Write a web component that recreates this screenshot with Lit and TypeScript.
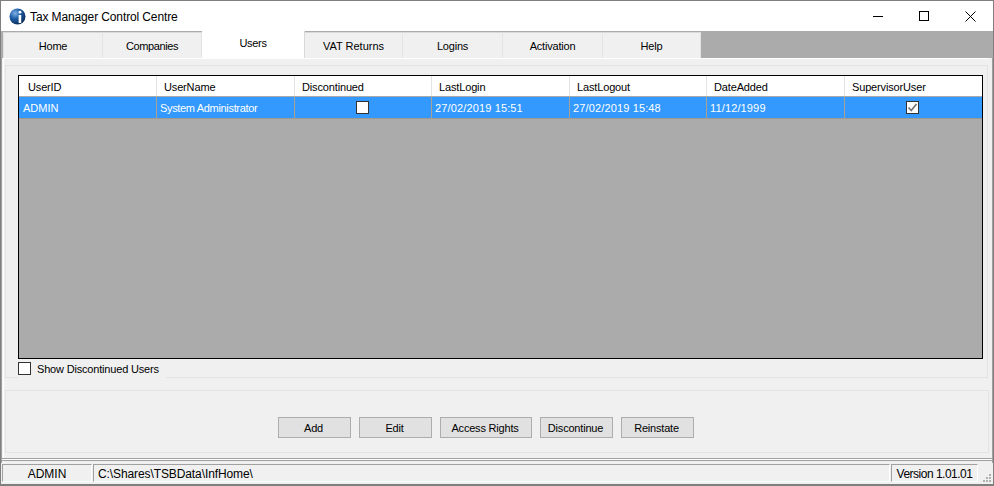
import { LitElement, html, css, svg } from "lit";
import { customElement } from "lit/decorators.js";

const COLS = [138, 138, 137, 138, 137, 138, 136];
const HEAD = ["UserID", "UserName", "Discontinued", "LastLogin", "LastLogout", "DateAdded", "SupervisorUser"];
const TABS: [string, number, number][] = [
  ["Home", 100, -0.2],
  ["Companies", 99, -0.4],
  ["Users", 103, -0.3],
  ["VAT Returns", 98, 0],
  ["Logins", 100, -0.2],
  ["Activation", 100, -0.2],
  ["Help", 98, -0.2],
];

@customElement("app-root")
export class AppRoot extends LitElement {
  static styles = css`
    :host { display: block; width: 994px; height: 486px; font-family: "Liberation Sans", Arial, sans-serif; font-size: 11px; color: #000; overflow: hidden; }
    * { box-sizing: border-box; }
    .win { width: 994px; height: 486px; border: 1px solid #7f7f7f; border-bottom-width: 2px; background: #f0f0f0; display: flex; flex-direction: column; }
    .title { height: 30px; background: #fff; display: flex; align-items: center; flex: none; }
    .logo { width: 17px; height: 17px; margin: 0 4px 0 8px; flex: none; }
    .title-text { flex: 1; color: #000; font-size: 12px; letter-spacing: -0.12px; padding-top: 1px; }
    .wbtn { width: 46px; height: 30px; display: flex; align-items: center; justify-content: center; }
    .tabs { height: 27px; background: #ababab; display: flex; align-items: stretch; padding-left: 2px; flex: none; }
    .tab { background: #f0f0f0; border: 1px solid #e3e3e3; border-left-width: 0; border-top: 1px solid #d9d9d9; border-bottom: 0; display: flex; align-items: center; justify-content: center; margin-top: 1px; padding-top: 1px; }
    .tab:first-child { border-left: 1px solid #e3e3e3; }
    .tab.on { background: #fff; margin-top: 0; padding: 0 0 3px; border-top: 0; border-right: 1px solid #d9d9d9; }
    .page { flex: 1; min-height: 0; display: flex; flex-direction: column; border-left: 1px solid #a0a0a0; border-right: 1px solid #a0a0a0; padding: 0 3px 0 1px; background: #f0f0f0; }
    .body { flex: 1; min-height: 0; border-left: 1px solid #fff; border-top: 1px solid #fff; padding: 6px 0 0 1px; display: flex; flex-direction: column; }
    .group { height: 313px; margin-right: 1px; border: 1px solid #e3e3e3; padding: 9px 4px 0 12px; flex: none; }
    .grid { height: 284px; border: 1px solid #000; background: #ababab; display: flex; flex-direction: column; }
    .row { display: flex; flex: none; }
    .head { height: 21px; background: #fff; border-bottom: 1px solid #a9a9a9; letter-spacing: -0.15px; }
    .head .c { border-right: 1px solid #e3e3e3; padding: 1px 0 0 7px; display: flex; align-items: center; }
    .head .c:first-child { padding-left: 9px; }
    .sel { height: 22px; background: #3399ff; color: #fff; border-bottom: 1px solid #a09a8e; }
    .sel .c { border-right: 1px solid #a9a294; padding-left: 3px; display: flex; align-items: center; }
    .sel .c:first-child { padding-left: 4px; }
    .sel .c.cb { justify-content: center; padding: 0 2px 0 0; }
    .c:last-child { border-right: 0 !important; }
    .name { letter-spacing: -0.33px; }
    .date { letter-spacing: 0.14px; }
    .box { width: 13px; height: 13px; display: block; }
    .show { display: flex; align-items: center; height: 19px; width: 148px; background: #f0f0f0; gap: 6px; white-space: nowrap; letter-spacing: -0.18px; }
    .show .box { background: #fff; border: 1px solid #333; flex: none; }
    .group2 { height: 63px; margin-top: 12px; border: 1px solid #e3e3e3; display: flex; align-items: flex-start; padding: 26px 0 0 272px; gap: 8px; flex: none; }
    .btn { height: 21px; background: #e1e1e1; border: 1px solid #adadad; padding-right: 2px; display: flex; align-items: center; justify-content: center; letter-spacing: -0.2px; }
    .rule { height: 3px; border-top: 1px solid #a0a0a0; border-bottom: 1px solid #a0a0a0; margin: 5px -3px 0 -3px; background: #fff; flex: none; }
    .status { height: 21px; flex: none; background: #f0f0f0; display: flex; padding: 1px 0 0 1px; font-size: 12px; }
    .cell { height: 18px; padding-top: 2px; border-top: 1px solid #a0a0a0; border-left: 1px solid #a0a0a0; border-right: 1px solid #fff; border-bottom: 1px solid #fff; display: flex; align-items: center; }
    .c1 { width: 90px; justify-content: center; }
    .c2 { width: 797px; padding-left: 4px; margin-left: 1px; letter-spacing: -0.1px; }
    .c3 { width: 87px; justify-content: center; margin-left: 1px; letter-spacing: -0.5px; }
    .grip { width: 15px; height: 19px; margin-left: auto; }
  `;

  logo() {
    return svg`<svg class="logo" viewBox="0 0 17 17">
      <defs><radialGradient id="g" cx="35%" cy="30%" r="75%"><stop offset="0" stop-color="#7fb2e6"/><stop offset=".45" stop-color="#1f5fa8"/><stop offset="1" stop-color="#0b2a55"/></radialGradient></defs>
      <circle cx="8.5" cy="8.5" r="8" fill="url(#g)"/>
      <circle cx="11" cy="4.2" r="1.4" fill="#fff"/>
      <path d="M9.6 7 h2.6 v8 h-2.6z" fill="#fff"/>
    </svg>`;
  }

  checkbox(on: boolean) {
    return svg`<svg class="box" viewBox="0 0 13 13">
      <rect x=".5" y=".5" width="12" height="12" fill="#fff" stroke="#333"/>
      ${on ? svg`<path d="M2.5 6.5 L5.2 9.5 L10.5 3" fill="none" stroke="#707070" stroke-width="1.6"/>` : ""}
    </svg>`;
  }

  render() {
    const vals = ["ADMIN", "System Administrator", null, "27/02/2019 15:51", "27/02/2019 15:48", "11/12/1999", null];
    return html`<div class="win">
      <div class="title">
        ${this.logo()}
        <div class="title-text">Tax Manager Control Centre</div>
        <div class="wbtn"><svg width="10" height="10" viewBox="0 0 10 10"><path d="M0 5.5H10" stroke="#000"/></svg></div>
        <div class="wbtn"><svg width="10" height="10" viewBox="0 0 10 10"><rect x=".5" y=".5" width="9" height="9" fill="none" stroke="#000"/></svg></div>
        <div class="wbtn"><svg width="11" height="11" viewBox="0 0 11 11"><path d="M.5 .5L10.5 10.5M10.5 .5L.5 10.5" stroke="#000"/></svg></div>
      </div>
      <div class="tabs">
        ${TABS.map(([t, w, ls]) => html`<div class="tab ${t === "Users" ? "on" : ""}" style="width:${w}px;letter-spacing:${ls}px">${t}</div>`)}
      </div>
      <div class="page">
        <div class="body">
          <div class="group">
            <div class="grid">
              <div class="row head">${HEAD.map((h, i) => html`<div class="c" style="width:${COLS[i]}px">${h}</div>`)}</div>
              <div class="row sel">${vals.map((v, i) => v === null
                ? html`<div class="c cb" style="width:${COLS[i]}px">${this.checkbox(i === 6)}</div>`
                : html`<div class="c" style="width:${COLS[i]}px"><span class=${i === 1 ? "name" : i > 2 ? "date" : ""}>${v}</span></div>`)}</div>
            </div>
            <label class="show"><span class="box"></span>Show Discontinued Users</label>
          </div>
          <div class="group2">
            ${[["Add", 73], ["Edit", 73], ["Access Rights", 92], ["Discontinue", 73], ["Reinstate", 73]].map(
              ([t, w]) => html`<div class="btn" style="width:${w}px">${t}</div>`)}
          </div>
          <div class="rule"></div>
        </div>
      </div>
      <div class="status">
        <div class="cell c1">ADMIN</div>
        <div class="cell c2">C:\\Shares\\TSBData\\InfHome\\</div>
        <div class="cell c3">Version 1.01.01</div>
        <svg class="grip" viewBox="0 0 15 19">
          ${[[11, 16], [8, 16], [5, 16], [11, 13], [8, 13], [11, 10]].map(([x, y]) => svg`<rect x=${x} y=${y} width="2" height="2" fill="#b0b0b0"/>`)}
        </svg>
      </div>
    </div>`;
  }
}
